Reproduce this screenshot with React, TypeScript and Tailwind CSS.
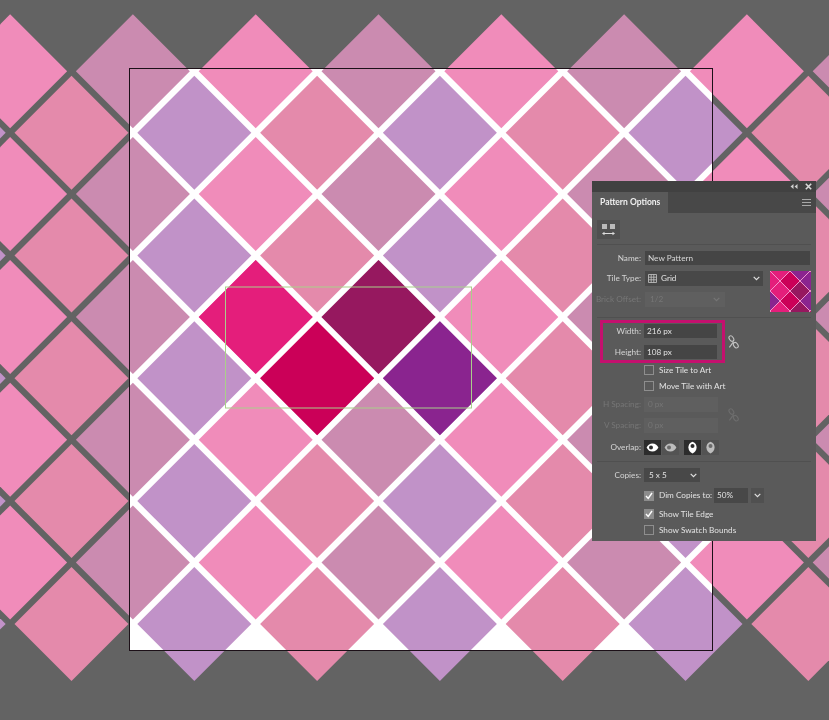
const PITCH = 61.4;
const HALF = 57;

const ROWS = Array.from({ length: 10 }, (_, i) => i);

function tileColor(col: number, row: number) {
  // the pattern repeats every 4 half steps across and 2 down
  const c = ((col % 4) + 4) % 4;
  if (row % 2 === 0) return c === 0 ? "#cb8bb0" : "#f08cba";
  return c === 1 ? "#c192c8" : "#e48aab";
}

function Artwork() {
  const tiles: { x: number; y: number; fill: string }[] = [];
  for (const row of ROWS) {
    for (let col = -4; col < 14; col++) {
      if ((col + row) % 2 !== 0) continue;
      tiles.push({
        x: 132.9 + col * PITCH,
        y: 71.3 + row * PITCH,
        fill: tileColor(col, row),
      });
    }
  }
  const hot = [
    { x: 255.7, y: 316.9, fill: "#e41e7b" },
    { x: 378.5, y: 316.9, fill: "#96185f" },
    { x: 317.1, y: 378.3, fill: "#cb0058" },
    { x: 439.9, y: 378.3, fill: "#8a248f" },
  ];
  const diamond = (x: number, y: number) =>
    `${x},${y - HALF} ${x + HALF},${y} ${x},${y + HALF} ${x - HALF},${y}`;

  return (
    <svg width="829" height="720" viewBox="0 0 829 720" className="block">
      <rect x="129.5" y="68.5" width="583" height="582" fill="#ffffff" />
      {tiles.map((t) => (
        <polygon key={`${t.x}-${t.y}`} points={diamond(t.x, t.y)} fill={t.fill} />
      ))}
      {hot.map((t) => (
        <polygon key={t.fill} points={diamond(t.x, t.y)} fill={t.fill} />
      ))}
      <rect x="129.5" y="68.5" width="583" height="582" fill="none" stroke="#1c1018" strokeWidth="1" />
      <rect x="225.5" y="287" width="246" height="121" fill="none" stroke="#a9cf8a" strokeWidth="1" />
    </svg>
  );
}

function Swatch() {
  const d = (x: number, y: number, fill: string) => (
    <polygon
      key={`${x}-${y}`}
      points={`${x},${y - 10} ${x + 10},${y} ${x},${y + 10} ${x - 10},${y}`}
      fill={fill}
      stroke="#f7a8d8"
      strokeWidth="0.8"
    />
  );
  return (
    <svg width="41" height="41" viewBox="0 0 41 41" className="block">
      <rect width="41" height="41" fill="#d4146f" />
      {d(0, 10, "#e41e7b")}
      {d(20, 10, "#cb0058")}
      {d(40, 10, "#8a248f")}
      {d(10, 0, "#e41e7b")}
      {d(30, 0, "#8a248f")}
      {d(10, 20, "#e41e7b")}
      {d(30, 20, "#96185f")}
      {d(0, 30, "#8a248f")}
      {d(20, 30, "#cb0058")}
      {d(40, 30, "#8a248f")}
      {d(10, 40, "#e41e7b")}
      {d(30, 40, "#96185f")}
    </svg>
  );
}

function Chevron({ className = "text-[#e0e0e0]" }: { className?: string }) {
  return (
    <svg width="7" height="5" viewBox="0 0 7 5" className={className}>
      <path d="M0.7 0.8 L3.5 3.6 L6.3 0.8" fill="none" stroke="currentColor" strokeWidth="1.2" />
    </svg>
  );
}

function LinkIcon({ dim = false }: { dim?: boolean }) {
  return (
    <svg width="13" height="14" viewBox="0 0 13 14" className={dim ? "text-[#6e6e6e]" : "text-[#c4c4c4]"}>
      <g fill="none" stroke="currentColor" strokeWidth="1.1">
        <ellipse cx="4.4" cy="3.6" rx="2" ry="3" transform="rotate(-35 4.4 3.6)" />
        <ellipse cx="8.8" cy="10.2" rx="2" ry="3" transform="rotate(-35 8.8 10.2)" />
        <path d="M6.6 6.6 L2.4 12.4" />
      </g>
    </svg>
  );
}

function CheckRow({ label, checked = false }: { label: string; checked?: boolean }) {
  return (
    <div className="flex items-center h-[10px] ml-[52px]">
      <Check checked={checked} />
      <span className="ml-[5px] text-[#e2e2e2] whitespace-nowrap">{label}</span>
    </div>
  );
}

function Check({ checked }: { checked: boolean }) {
  return (
    <span
      className={`flex items-center justify-center w-[10px] h-[10px] border ${
        checked ? "bg-[#8c8c8c] border-[#8c8c8c]" : "border-[#8e8e8e]"
      }`}
    >
      {checked && (
        <svg width="8" height="8" viewBox="0 0 8 8">
          <path d="M1 4 L3.2 6.4 L7 1" fill="none" stroke="#ffffff" strokeWidth="1.4" />
        </svg>
      )}
    </span>
  );
}

function Label({ children, dim = false, w = "w-[49px]" }: { children: string; dim?: boolean; w?: string }) {
  return (
    <span className={`${w} shrink-0 text-right whitespace-nowrap ${dim ? "text-[#767676]" : "text-[#d4d4d4]"}`}>
      {children}
    </span>
  );
}

function OverlapIcon({ vertical = false, active = false }: { vertical?: boolean; active?: boolean }) {
  const c = active ? "#ffffff" : "#bdbdbd";
  return (
    <span className={`flex items-center justify-center w-[17px] h-[15px] ${active ? "bg-[#2c2c2c]" : "bg-[#535353]"}`}>
      <svg width="13" height="13" viewBox="0 0 13 13">
        {vertical ? (
          <>
            <path d="M6.5 0.8 C9.5 2 10.6 4 10.6 6.4 C10.6 9.4 8.6 11.4 6.5 12.4 C4.4 11.4 2.4 9.4 2.4 6.4 C2.4 4 3.5 2 6.5 0.8 Z" fill={c} />
            <circle cx="6.5" cy="5" r="2" fill={active ? "#2c2c2c" : "#6a6a6a"} />
          </>
        ) : (
          <>
            <path d="M0.6 6.5 C2 3.6 4 2.4 6.4 2.4 C9.4 2.4 11.4 4.4 12.4 6.5 C11.4 8.6 9.4 10.6 6.4 10.6 C4 10.6 2 9.4 0.6 6.5 Z" fill={c} />
            <circle cx="5" cy="6.5" r="2" fill={active ? "#2c2c2c" : "#6a6a6a"} />
          </>
        )}
      </svg>
    </span>
  );
}

function PatternPanel() {
  return (
    <div className="absolute left-[592px] top-[181px] w-[224px] h-[360px] flex flex-col bg-[#5a5a5a] text-[8.2px] leading-none font-['Lato','Noto_Sans',sans-serif] text-[#d4d4d4] blur-[0.3px]">
      <div className="flex h-[11px] items-center justify-end gap-[7px] pr-[4px] bg-[#414141]">
        <svg width="8" height="5" viewBox="0 0 8 5" className="text-[#cfcfcf]">
          <path d="M3.5 0 L0.5 2.5 L3.5 5 Z M7.5 0 L4.5 2.5 L7.5 5 Z" fill="currentColor" />
        </svg>
        <svg width="7" height="7" viewBox="0 0 7 7" className="text-[#d8d8d8]">
          <path d="M0.8 0.8 L6.2 6.2 M6.2 0.8 L0.8 6.2" stroke="currentColor" strokeWidth="1.6" />
        </svg>
      </div>

      <div className="flex h-[21px] justify-between bg-[#484848]">
        <div className="flex items-center w-[76px] pl-[8px] bg-[#5a5a5a] text-[8.5px] font-bold whitespace-nowrap text-[#f0f0f0]">
          Pattern Options
        </div>
        <div className="flex flex-col justify-center gap-[2px] pr-[5px]">
          <span className="block w-[9px] h-px bg-[#a8a8a8]" />
          <span className="block w-[9px] h-px bg-[#a8a8a8]" />
          <span className="block w-[9px] h-px bg-[#a8a8a8]" />
        </div>
      </div>

      <div className="flex items-center justify-center ml-[5px] mt-[7px] w-[23px] h-[19px] bg-[#505050]">
        <svg width="15" height="13" viewBox="0 0 15 13" className="text-[#dcdcdc]">
          <path d="M1 1 H6 V6 H1 Z M9 1 H14 V6 H9 Z" fill="currentColor" opacity="0.75" />
          <path d="M2.5 10.5 H12.5" stroke="currentColor" strokeWidth="1" />
          <path d="M1 10.5 L3.5 8.8 V12.2 Z M14 10.5 L11.5 8.8 V12.2 Z" fill="currentColor" />
        </svg>
      </div>

      <div className="mt-[5px] mx-[5px] h-px bg-[#505050]" />

      <div className="flex items-center mt-[6px] h-[14px]">
        <Label>Name:</Label>
        <div className="flex items-center ml-[4px] pl-[3px] w-[165px] h-full bg-[#454545] text-[#d8d8d8]">New Pattern</div>
      </div>

      <div className="relative flex items-center mt-[6px] h-[15px]">
        <Label>Tile Type:</Label>
        <div className="flex items-center justify-between ml-[4px] pl-[3px] pr-[3px] w-[118px] h-full bg-[#484848]">
          <span className="flex items-center gap-[4px] text-[#e2e2e2]">
            <svg width="9" height="9" viewBox="0 0 9 9" className="text-[#c8c8c8]">
              <path d="M0.5 0.5 H8.5 V8.5 H0.5 Z M3.2 0.5 V8.5 M5.8 0.5 V8.5 M0.5 3.2 H8.5 M0.5 5.8 H8.5" fill="none" stroke="currentColor" strokeWidth="0.8" />
            </svg>
            Grid
          </span>
          <Chevron />
        </div>
        <div className="absolute left-[178px] top-0">
          <Swatch />
        </div>
      </div>

      <div className="flex items-center mt-[6px] h-[15px]">
        <Label dim>Brick Offset:</Label>
        <div className="flex items-center justify-between ml-[4px] pl-[5px] pr-[5px] w-[80px] h-full bg-[#5f5f5f] text-[#767676]">
          1/2
          <Chevron className="text-[#757575]" />
        </div>
      </div>

      <div className="mt-[10px] mx-[5px] h-px bg-[#505050]" />

      <div className="flex items-center mt-[2px]">
        <div className="flex flex-col gap-[7px] ml-[8px] w-[125px] h-[43px] pt-px border-3 border-[#c4106e]">
          <div className="flex items-center h-[14px]">
            <Label w="w-[38px]">Width:</Label>
            <div className="flex items-center ml-[3px] pl-[3px] w-[73px] h-full bg-[#454545] text-[#e2e2e2]">216 px</div>
          </div>
          <div className="flex items-center h-[14px]">
            <Label w="w-[38px]">Height:</Label>
            <div className="flex items-center ml-[3px] pl-[3px] w-[73px] h-full bg-[#454545] text-[#e2e2e2]">108 px</div>
          </div>
        </div>
        <div className="ml-[2px]">
          <LinkIcon />
        </div>
      </div>

      <div className="flex flex-col gap-[6px] mt-[2px]">
        <CheckRow label="Size Tile to Art" />
        <CheckRow label="Move Tile with Art" />
      </div>

      <div className="flex items-center mt-[6px]">
        <div className="flex flex-col gap-[6px]">
          <div className="flex items-center h-[15px]">
            <Label dim>H Spacing:</Label>
            <div className="flex items-center ml-[3px] pl-[4px] w-[74px] h-full bg-[#5f5f5f] text-[#767676]">0 px</div>
          </div>
          <div className="flex items-center h-[15px]">
            <Label dim>V Spacing:</Label>
            <div className="flex items-center ml-[3px] pl-[4px] w-[74px] h-full bg-[#5f5f5f] text-[#767676]">0 px</div>
          </div>
        </div>
        <div className="ml-[9px]">
          <LinkIcon dim />
        </div>
      </div>

      <div className="flex items-center mt-[7px] h-[15px]">
        <Label>Overlap:</Label>
        <div className="flex items-center ml-[3px]">
          <OverlapIcon active />
          <span className="ml-px">
            <OverlapIcon />
          </span>
          <span className="ml-[5px]">
            <OverlapIcon vertical active />
          </span>
          <span className="ml-px">
            <OverlapIcon vertical />
          </span>
        </div>
      </div>

      <div className="mt-[6px] mx-[5px] h-px bg-[#505050]" />

      <div className="flex items-center mt-[6px] h-[14px]">
        <Label>Copies:</Label>
        <div className="flex items-center justify-between ml-[3px] pl-[5px] pr-[3px] w-[56px] h-full bg-[#484848] text-[#e2e2e2]">
          5 x 5
          <Chevron />
        </div>
      </div>

      <div className="flex items-center mt-[6px] h-[15px] ml-[52px]">
        <Check checked />
        <span className="ml-[5px] w-[51px] text-[#e2e2e2] whitespace-nowrap">Dim Copies to:</span>
        <div className="flex items-center ml-[4px] pl-[3px] w-[34px] h-full bg-[#484848] text-[#e2e2e2]">50%</div>
        <div className="flex items-center justify-center ml-[3px] w-[13px] h-full bg-[#505050]">
          <Chevron />
        </div>
      </div>

      <div className="flex flex-col gap-[6px] mt-[6px]">
        <CheckRow label="Show Tile Edge" checked />
        <CheckRow label="Show Swatch Bounds" />
      </div>
    </div>
  );
}

export default function App() {
  return (
    <div className="relative w-[829px] h-[720px] overflow-hidden bg-[#636363]">
      <Artwork />
      <PatternPanel />
    </div>
  );
}
